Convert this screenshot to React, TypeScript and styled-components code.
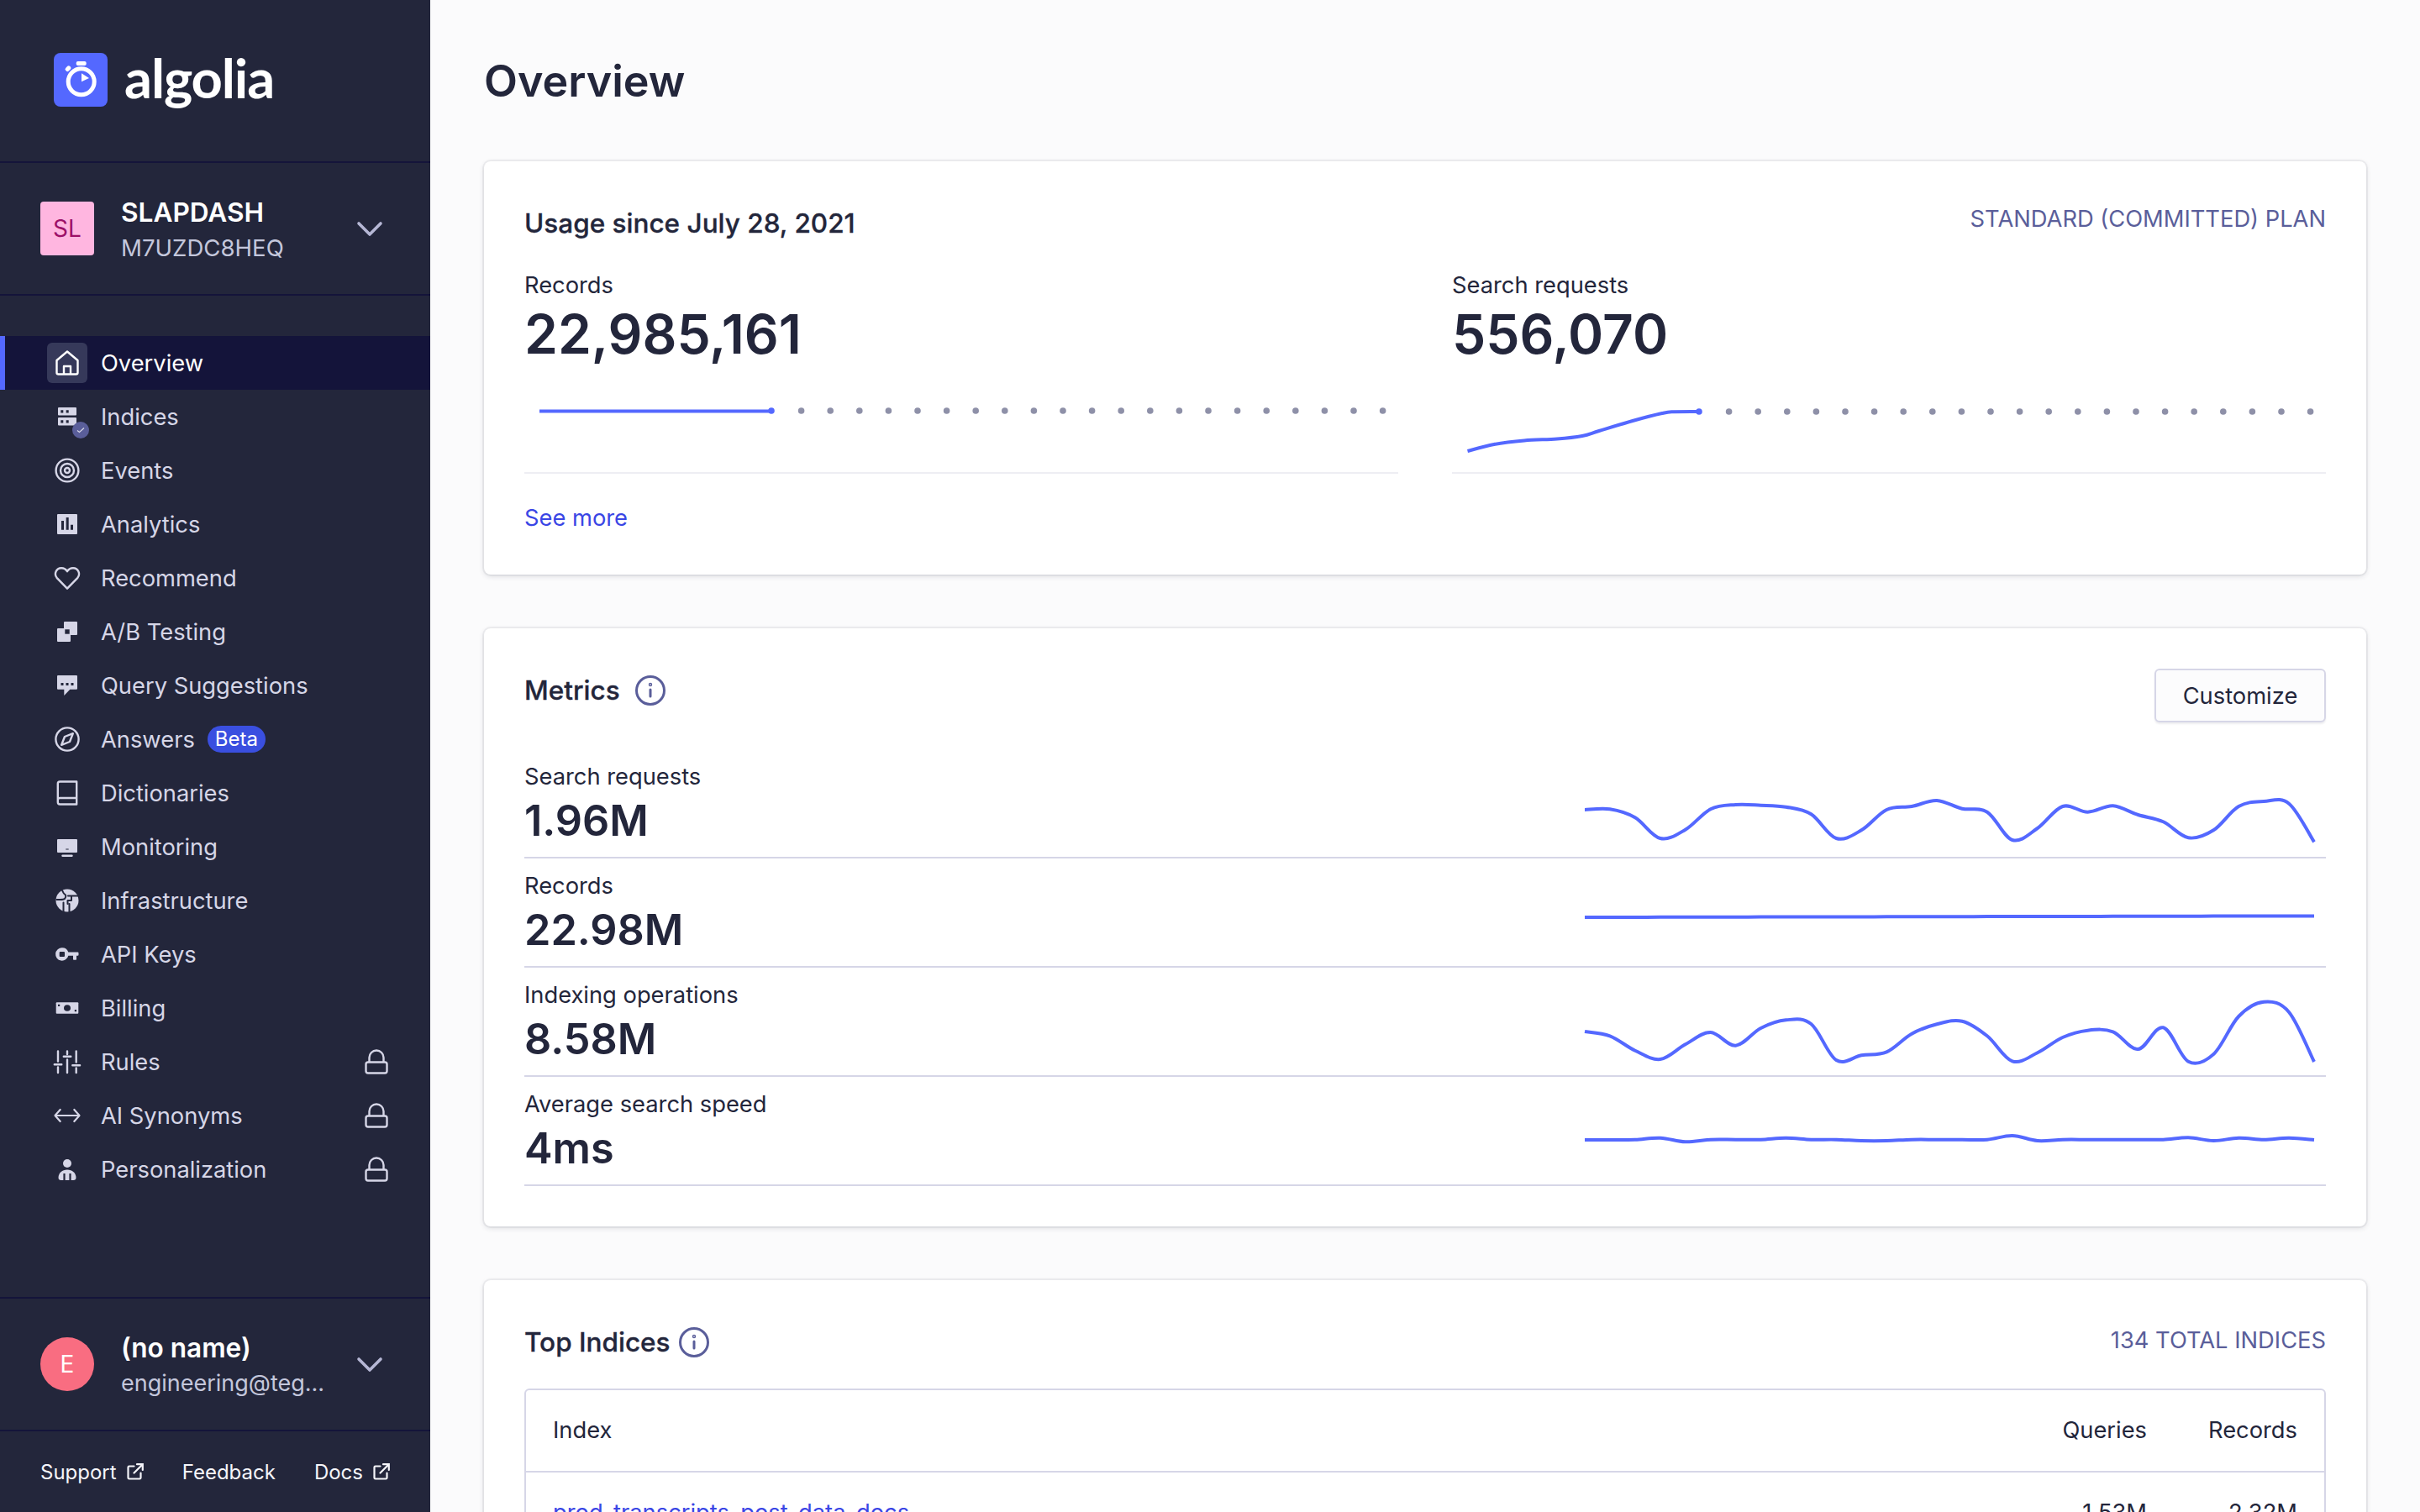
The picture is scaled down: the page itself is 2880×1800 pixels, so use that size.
import React, { FC, ReactNode } from "react";
import styled, { createGlobalStyle } from "styled-components";

const GlobalStyle = createGlobalStyle`
  html, body {
    margin: 0;
    padding: 0;
    height: 1800px;
    overflow: hidden;
    background: #fbfbfc;
    font-family: Inter, "Liberation Sans", sans-serif;
    color: #23263b;
  }
  * {
    box-sizing: border-box;
  }
`;

// Build a smooth line through evenly spaced samples
const smoothPath = (pts: [number, number][]) => {
  let d = `M${pts[0][0]} ${pts[0][1]}`;
  for (let i = 0; i < pts.length - 1; i++) {
    const p0 = pts[i - 1] || pts[i];
    const p1 = pts[i];
    const p2 = pts[i + 1];
    const p3 = pts[i + 2] || p2;
    const k = 0.17;
    d += ` C${(p1[0] + (p2[0] - p0[0]) * k).toFixed(1)} ${(p1[1] + (p2[1] - p0[1]) * k).toFixed(1)} ${(p2[0] - (p3[0] - p1[0]) * k).toFixed(1)} ${(p2[1] - (p3[1] - p1[1]) * k).toFixed(1)} ${p2[0].toFixed(1)} ${p2[1].toFixed(1)}`;
  }
  return d;
};

const sparkPoints = (ys: number[]): [number, number][] =>
  ys.map((y, i) => [2 + (i * 868) / 29, y]);

const searchLine = [612, 610, 640, 714, 683, 610, 594, 596, 602, 628, 714, 685, 612, 600, 579, 608, 620, 720, 678, 600, 620, 598, 630, 655, 712, 685, 600, 582, 590, 727].map(
  v => v / 3 - 132
);
const recordsLine = Array.from({ length: 30 }, (_, i) => 70 - (i * 1.6) / 29);
const indexingLine = [204, 220, 272, 303, 250, 207, 254, 192, 163, 177, 306, 289, 277, 212, 178, 167, 220, 310, 280, 225, 200, 205, 267, 190, 311, 285, 150, 98, 135, 312].map(
  v => v / 3 + 8
);
const speedLine = [591, 591, 590, 584, 598, 590, 590, 590, 584, 590, 590, 594, 594, 590, 590, 590, 590, 576, 594, 590, 590, 590, 590, 590, 583, 594, 584, 590, 584, 591].map(
  v => v / 3 - 122
);

const Page = styled.div`
  display: flex;
  width: 2880px;
  height: 1800px;
  overflow: hidden;
`;

const Sidebar = styled.aside`
  display: flex;
  flex: 0 0 512px;
  flex-direction: column;
  min-width: 0;
  height: 1800px;
  background: #23263b;
  color: #d6d6e7;
`;

const LogoBar = styled.div`
  display: flex;
  align-items: center;
  gap: 20px;
  height: 194px;
  padding: 0 0 2px 64px;
  border-bottom: 2px solid #14143a;
`;

const LogoWord = styled.span`
  margin-top: -6px;
  color: #fff;
  font-family: Lato, sans-serif;
  font-size: 65px;
  font-weight: 700;
  letter-spacing: -1.1px;
  line-height: 64px;
`;

const Switcher = styled.div`
  display: flex;
  align-items: center;
  gap: 32px;
  height: 158px;
  padding: 0 56px 0 48px;
  border-bottom: 2px solid #14143a;
`;

const Avatar = styled.div<{ $round?: boolean }>`
  display: flex;
  flex: 0 0 64px;
  align-items: center;
  justify-content: center;
  height: 64px;
  border-radius: ${p => (p.$round ? "50%" : "4px")};
  background: ${p => (p.$round ? "#f96d81" : "#ffb6e0")};
  color: ${p => (p.$round ? "#fff" : "#9c1068")};
  font-size: 28px;
`;

const SwitcherText = styled.div`
  flex: 1;
  min-width: 0;
  padding-top: 2px;
`;

const SwitcherTitle = styled.div`
  color: #fff;
  font-size: 31.6px;
  font-weight: 600;
  line-height: 44px;
`;

const SwitcherSub = styled.div`
  overflow: hidden;
  color: #c4c7dc;
  font-size: 27.6px;
  line-height: 40px;
  white-space: nowrap;
`;

const EmailSub = styled(SwitcherSub)`
  font-size: 27px;
`;

const Chevron = styled.svg`
  flex: 0 0 32px;
  height: 32px;
  fill: none;
  stroke: #b6b7d5;
  stroke-linecap: round;
  stroke-linejoin: round;
  stroke-width: 3.6;
`;

const Nav = styled.nav`
  display: flex;
  flex: 1;
  flex-direction: column;
  padding-top: 48px;
`;

const NavItem = styled.div<{ $active?: boolean }>`
  display: flex;
  align-items: center;
  gap: 16px;
  height: 64px;
  padding: 0 48px 0 56px;
  background: ${p => (p.$active ? "#14143a" : "transparent")};
  box-shadow: ${p => (p.$active ? "inset 6px 0 0 #5468ff" : "none")};
  color: ${p => (p.$active ? "#fff" : "#d6d6e7")};
  font-size: 27.3px;
  line-height: 40px;
`;

const NavLabel = styled.span`
  padding-top: 2px;
`;

const IconBox = styled.div<{ $active?: boolean }>`
  position: relative;
  flex: 0 0 48px;
  height: 48px;
  border-radius: 6px;
  background: ${p => (p.$active ? "#36395a" : "transparent")};
`;

const Glyph = styled.svg`
  display: block;
  width: 48px;
  height: 48px;
  color: inherit;
  fill: none;
  stroke: currentColor;
  stroke-linecap: round;
  stroke-linejoin: round;
  stroke-width: 2.4;
`;

const StatusDot = styled.span`
  position: absolute;
  top: 30px;
  left: 30px;
  display: flex;
  align-items: center;
  justify-content: center;
  width: 20px;
  height: 20px;
  border-radius: 50%;
  background: #5a5e9a;
`;

const BetaTag = styled.span`
  margin-left: -1px;
  padding: 0 9px;
  border-radius: 16px;
  background: #3a4fe0;
  color: #fff;
  font-size: 24px;
  line-height: 32px;
`;

const LockIcon = styled.svg`
  flex: 0 0 32px;
  height: 32px;
  margin-left: auto;
  fill: none;
  stroke: #d6d6e7;
  stroke-linejoin: round;
  stroke-width: 2.4;
`;

const UserSwitcher = styled(Switcher)`
  height: 160px;
  border-top: 2px solid #14143a;
`;

const SideFooter = styled.div`
  display: flex;
  flex: 0 0 96px;
  align-items: center;
  justify-content: space-between;
  padding: 0 48px;
  color: #f5f5fa;
  font-size: 24px;
`;

const FooterLink = styled.span`
  display: flex;
  align-items: center;
  gap: 12px;
`;

const ExternalIcon = styled.svg`
  width: 20px;
  height: 20px;
  fill: none;
  stroke: currentColor;
  stroke-linecap: round;
  stroke-width: 2.2;
`;

const Main = styled.main`
  display: flex;
  flex: 1;
  flex-direction: column;
  gap: 64px;
  min-width: 0;
  padding: 0 64px;
`;

const PageTitle = styled.h1`
  flex: none;
  height: 128px;
  margin: 0;
  padding-top: 65px;
  color: #23263b;
  font-size: 52px;
  font-weight: 600;
  line-height: 64px;
`;

const Card = styled.section`
  flex: none;
  padding: 48px;
  border-radius: 8px;
  background: #fff;
  box-shadow: 0 0 0 2px rgba(35, 38, 59, 0.05), 0 2px 6px rgba(35, 38, 59, 0.15);
`;

const CardHead = styled.div<{ $height: number }>`
  display: flex;
  align-items: flex-start;
  justify-content: space-between;
  height: ${p => p.$height}px;
`;

const CardTitle = styled.h2`
  display: flex;
  align-items: center;
  gap: 18px;
  margin: 0;
  font-size: 31.5px;
  font-weight: 500;
  -webkit-text-stroke: 0.3px #23263b;
  line-height: 52px;
`;

const TopTitle = styled(CardTitle)`
  gap: 10px;
`;

const PlanLabel = styled.span<{ $top?: number }>`
  margin-top: ${p => p.$top || 1}px;
  color: #5a5e9a;
  font-size: 27.3px;
  line-height: 40px;
`;

const InfoIcon = styled.svg`
  width: 36px;
  height: 36px;
  fill: none;
  stroke: #5a5e9a;
  stroke-linecap: round;
  stroke-width: 3;
`;

const StatGrid = styled.div`
  display: grid;
  grid-template-columns: 1040px 1040px;
  gap: 64px;
`;

const StatLabel = styled.div`
  font-size: 27.3px;
  line-height: 40px;
`;

const StatValue = styled.div`
  font-size: 64px;
  font-weight: 600;
  line-height: 76px;
`;

const UsageChart = styled.svg`
  display: block;
  width: 1040px;
  height: 128px;
  border-bottom: 2px solid #eeeef3;
  fill: none;
`;

const SeeMore = styled.div`
  margin: 33px 0 -1px;
  color: #3a46e5;
  font-size: 27.3px;
  line-height: 40px;
`;

const CustomizeButton = styled.button`
  width: 204px;
  height: 64px;
  border: 2px solid #d6d6e7;
  border-radius: 6px;
  background: #fcfcfd;
  box-shadow: 0 2px 2px rgba(35, 38, 59, 0.08);
  color: #23263b;
  font-family: inherit;
  font-size: 27.3px;
`;

const MetricRow = styled.div`
  position: relative;
  display: flex;
  justify-content: space-between;
  height: 130px;
  padding-top: 13px;
  border-bottom: 2px solid #d6d6e7;
`;

const MetricValue = styled.div`
  font-size: 50.4px;
  font-weight: 600;
  line-height: 64px;
`;

const Spark = styled.svg`
  flex: none;
  width: 872px;
  height: 128px;
  margin: -13px 12px 0 0;
  fill: none;
  stroke: #5468ff;
  stroke-linecap: butt;
  stroke-linejoin: round;
  stroke-width: 4;
`;

const IndexTable = styled.div`
  border: 2px solid #d6d6e7;
  border-radius: 6px;
`;

const TableRow = styled.div<{ $head?: boolean }>`
  display: grid;
  grid-template-columns: 1fr 179px 179px;
  padding: 28px 32px;
  border-bottom: ${p => (p.$head ? "2px solid #d6d6e7" : "none")};
  font-size: 27.3px;
  line-height: 40px;
`;

const NumberCell = styled.div`
  text-align: right;
`;

const IndexLink = styled.div`
  color: #3a46e5;
`;

const Dark = "#23263b";

const navItems: { label: string; icon: ReactNode; locked?: boolean; beta?: boolean; status?: boolean }[] = [
  {
    label: "Indices",
    status: true,
    icon: (
      <>
        <path fill="currentColor" stroke="none" d="M14 13h20a1 1 0 0 1 1 1v7.500a1 1 0 0 1-1 1H14a1 1 0 0 1-1-1V14a1 1 0 0 1 1-1zM14 25h20a1 1 0 0 1 1 1v7.500a1 1 0 0 1-1 1H14a1 1 0 0 1-1-1V26a1 1 0 0 1 1-1z" />
        <path fill={Dark} stroke="none" d="M16.300 16.300h3v3.300h-3zM22.700 16.300h3v3.300h-3zM16.300 28.300h3v3.300h-3zM22.700 28.300h3v3.300h-3z" />
      </>
    )
  },
  {
    label: "Events",
    icon: (
      <>
        <circle cx="24" cy="24" r="13.400" />
        <circle cx="24" cy="24" r="8" />
        <circle cx="24" cy="24" r="3" />
      </>
    )
  },
  {
    label: "Analytics",
    icon: (
      <>
        <rect x="12" y="12" width="24" height="24" rx="1" fill="currentColor" stroke="none" />
        <path fill={Dark} stroke="none" d="M17 20h3v10.700h-3zM22.700 16h3v14.700h-3zM28 24.700h3v6h-3z" />
      </>
    )
  },
  {
    label: "Recommend",
    icon: <path d="M24 36.700 11.600 23.800C7.900 19.300 10.900 12.200 17 12.200c3 0 5.500 1.500 7 4 1.500-2.500 4-4 7-4 6.100 0 9.100 7.100 5.400 11.600z" />
  },
  {
    label: "A/B Testing",
    icon: (
      <>
        <rect x="20" y="12" width="16" height="16" rx="1" fill="currentColor" stroke="none" />
        <rect x="12" y="20" width="16" height="16" rx="1" fill="currentColor" stroke="none" />
        <rect x="21.300" y="21.300" width="5.400" height="5.400" fill={Dark} stroke="none" />
      </>
    )
  },
  {
    label: "Query Suggestions",
    icon: (
      <>
        <path fill="currentColor" stroke="none" d="M13 12h22a1 1 0 0 1 1 1v14.700a1 1 0 0 1-1 1h-7.700L20.300 36v-7.300H13a1 1 0 0 1-1-1V13a1 1 0 0 1 1-1z" />
        <path fill={Dark} stroke="none" d="M16.500 21h3v3h-3zM22.500 21h3v3h-3zM28.500 21h3v3h-3z" />
      </>
    )
  },
  {
    label: "Answers",
    beta: true,
    icon: (
      <>
        <circle cx="24" cy="24" r="13.600" />
        <path d="M30.800 17.200 27 27l-9.800 3.800L21 21z" />
      </>
    )
  },
  {
    label: "Dictionaries",
    icon: <path d="M12.800 33.500V13a2.500 2.500 0 0 1 2.500-2.500h19.900v27H15.300a2.500 2.500 0 0 1-2.500-2.500v-2.500a2.500 2.500 0 0 1 2.500-2.500h19.900" />
  },
  {
    label: "Monitoring",
    icon: (
      <>
        <rect x="12" y="15" width="24" height="16" rx="1" fill="currentColor" stroke="none" />
        <path d="M18.500 34.700h11" />
        <path stroke={Dark} strokeWidth="1" d="M22.700 27h2.600" />
      </>
    )
  },
  {
    label: "Infrastructure",
    icon: (
      <>
        <circle cx="24" cy="24" r="13.500" fill="currentColor" stroke="none" />
        <path stroke={Dark} strokeWidth="2" d="M18 12c1 2.500 2 4 3.500 5 1.200 1 .500 3.500-.500 5-1.500 1.500-5 1-9.500 1M25 18.500h12M29 18.500V24h-4.500v4M19.500 26.500v11.500M26.500 28v10" />
      </>
    )
  },
  {
    label: "API Keys",
    icon: (
      <path
        fill="currentColor"
        stroke="none"
        fillRule="evenodd"
        d="M18 16.300a7.700 7.700 0 0 1 7.300 5.200h11.200a1 1 0 0 1 1 1v2.200a1 1 0 0 1-1 1H35v4.300a.8.800 0 0 1-.8.800h-2.400a.8.800 0 0 1-.8-.8v-4.300h-5.700A7.700 7.700 0 1 1 18 16.300zm-2.300 4.700a1 1 0 0 0-1 1v4a1 1 0 0 0 1 1H20a1 1 0 0 0 1-1v-4a1 1 0 0 0-1-1z"
      />
    )
  },
  {
    label: "Billing",
    icon: (
      <>
        <rect x="10.700" y="17.300" width="26.600" height="13.400" rx="1" fill="currentColor" stroke="none" />
        <ellipse cx="24" cy="24" rx="4" ry="3.800" fill={Dark} stroke="none" />
        <path fill={Dark} stroke="none" d="M13 19.700h2.200v2.200H13zM32.800 26.100H35v2.200h-2.200z" />
      </>
    )
  },
  {
    label: "Rules",
    locked: true,
    icon: <path d="M13 11.500v12M13 30.500v6.500M24 11.500v3.500M24 21.500V37M34.700 11.500v13M34.700 31.500V37M8.800 27.300h8.500M19.800 17.700h8.500M30.300 28.300h8.800" />
  },
  {
    label: "AI Synonyms",
    locked: true,
    icon: <path strokeWidth="2.200" d="M9.500 24h29M15.700 17 9.500 24l6.200 7M32.300 17l6.200 7-6.200 7" />
  },
  {
    label: "Personalization",
    locked: true,
    icon: (
      <>
        <circle cx="24" cy="17" r="5" fill="currentColor" stroke="none" />
        <path fill="currentColor" stroke="none" d="M24 24.500c6 0 10.500 4 10.500 9.500 0 1.800-1.200 3-3 3h-15c-1.800 0-3-1.200-3-3 0-5.500 4.500-9.500 10.500-9.500z" />
        <path stroke={Dark} strokeWidth="2.200" strokeLinecap="butt" d="M20.500 29v8M27.500 29v8" />
      </>
    )
  }
];

const Lock = () => (
  <LockIcon viewBox="0 0 32 32">
    <rect x="3.500" y="16.500" width="25" height="13" rx="2.500" />
    <path d="M7.500 16.500V11a8.500 8.500 0 0 1 17 0v5.500" />
  </LockIcon>
);

const ChevronDown = () => (
  <Chevron viewBox="0 0 32 32">
    <path d="M3 10l13 13 13-13" />
  </Chevron>
);

const External = () => (
  <ExternalIcon viewBox="0 0 20 20">
    <path d="M8.500 3.500H2.800a1.300 1.300 0 0 0-1.300 1.300v12.400a1.300 1.300 0 0 0 1.300 1.300h12.400a1.300 1.300 0 0 0 1.300-1.300v-5.700M8.500 11.500 18.500 1.500M12 1.200h6.800V8" />
  </ExternalIcon>
);

const Info = () => (
  <InfoIcon viewBox="0 0 36 36">
    <circle cx="18" cy="18" r="16.500" />
    <path d="M18 17v8" />
    <circle cx="18" cy="11" r="0.700" />
  </InfoIcon>
);

// Dotted remainder of the billing period, after the line stops
const Dots: FC<{ cy: number }> = ({ cy }) => (
  <>
    <circle cx={294} cy={cy} r="3.800" fill="#5468ff" />
    {Array.from({ length: 21 }, (_, i) => (
      <circle key={i} cx={329.6 + i * 34.6} cy={cy} r="3.800" fill="#8e90a8" />
    ))}
  </>
);

const Metric: FC<{ label: string; value: string; line: number[] }> = ({ label, value, line }) => (
  <MetricRow>
    <div>
      <StatLabel>{label}</StatLabel>
      <MetricValue>{value}</MetricValue>
    </div>
    <Spark viewBox="0 0 872 128">
      <path d={smoothPath(sparkPoints(line))} />
    </Spark>
  </MetricRow>
);

const App = () => (
  <Page>
    <GlobalStyle />
    <Sidebar>
      <LogoBar>
        <svg width="64" height="64" viewBox="0 0 64 64">
          <rect width="64" height="64" rx="8" fill="#5468ff" />
          <circle cx="32.700" cy="34.300" r="15.500" fill="none" stroke="#fff" strokeWidth="5" />
          <path fill="#fff" d="M33 24.300l9 5.700-9 4.300z" />
          <rect x="26.700" y="10" width="12" height="5" rx="2" fill="#fff" />
          <rect x="13.500" y="16.200" width="7" height="5" rx="2" fill="#fff" transform="rotate(-45 17 18.700)" />
        </svg>
        <LogoWord>algolia</LogoWord>
      </LogoBar>
      <Switcher>
        <Avatar>SL</Avatar>
        <SwitcherText>
          <SwitcherTitle>SLAPDASH</SwitcherTitle>
          <SwitcherSub>M7UZDC8HEQ</SwitcherSub>
        </SwitcherText>
        <ChevronDown />
      </Switcher>
      <Nav>
        <NavItem $active>
          <IconBox $active>
            <Glyph viewBox="0 0 48 48">
              <path d="M11.500 21 24 10.500 36.500 21v14.500a2 2 0 0 1-2 2h-21a2 2 0 0 1-2-2zM20 37.500V28h8v9.500" />
            </Glyph>
          </IconBox>
          <NavLabel>Overview</NavLabel>
        </NavItem>
        {navItems.map(item => (
          <NavItem key={item.label}>
            <IconBox>
              <Glyph viewBox="0 0 48 48">{item.icon}</Glyph>
              {item.status && (
                <StatusDot>
                  <svg width="12" height="12" viewBox="0 0 12 12" fill="none" stroke="#d6d6e7" strokeWidth="1.200">
                    <path d="M2 6.500l2.500 2L10 3.500" />
                  </svg>
                </StatusDot>
              )}
            </IconBox>
            <NavLabel>{item.label}</NavLabel>
            {item.beta && <BetaTag>Beta</BetaTag>}
            {item.locked && <Lock />}
          </NavItem>
        ))}
      </Nav>
      <UserSwitcher>
        <Avatar $round>E</Avatar>
        <SwitcherText>
          <SwitcherTitle>(no name)</SwitcherTitle>
          <EmailSub>engineering@teg...</EmailSub>
        </SwitcherText>
        <ChevronDown />
      </UserSwitcher>
      <SideFooter>
        <FooterLink>
          Support <External />
        </FooterLink>
        <FooterLink>Feedback</FooterLink>
        <FooterLink>
          Docs <External />
        </FooterLink>
      </SideFooter>
    </Sidebar>
    <Main>
      <PageTitle>Overview</PageTitle>
      <Card>
        <CardHead $height={80}>
          <CardTitle>Usage since July 28, 2021</CardTitle>
          <PlanLabel>STANDARD (COMMITTED) PLAN</PlanLabel>
        </CardHead>
        <StatGrid>
          <div>
            <StatLabel>Records</StatLabel>
            <StatValue>22,985,161</StatValue>
            <UsageChart viewBox="0 0 1040 126">
              <path d="M18 53.500H294" stroke="#5468ff" strokeWidth="4" />
              <Dots cy={53} />
            </UsageChart>
          </div>
          <div>
            <StatLabel>Search requests</StatLabel>
            <StatValue>556,070</StatValue>
            <UsageChart viewBox="0 0 1040 126">
              <path
                d={smoothPath([[18.500, 101], [50, 93], [86, 88.500], [125, 86.500], [155, 83], [175, 77], [215, 65], [250, 56], [264, 54.200], [294, 54]])}
                stroke="#5468ff"
                strokeWidth="4"
              />
              <Dots cy={54} />
            </UsageChart>
          </div>
        </StatGrid>
        <SeeMore>See more</SeeMore>
      </Card>
      <Card>
        <CardHead $height={96}>
          <CardTitle>
            Metrics <Info />
          </CardTitle>
          <CustomizeButton>Customize</CustomizeButton>
        </CardHead>
        <Metric label="Search requests" value="1.96M" line={searchLine} />
        <Metric label="Records" value="22.98M" line={recordsLine} />
        <Metric label="Indexing operations" value="8.58M" line={indexingLine} />
        <Metric label="Average search speed" value="4ms" line={speedLine} />
      </Card>
      <Card>
        <CardHead $height={81}>
          <TopTitle>
            Top Indices <Info />
          </TopTitle>
          <PlanLabel $top={4}>134 TOTAL INDICES</PlanLabel>
        </CardHead>
        <IndexTable>
          <TableRow $head>
            <div>Index</div>
            <NumberCell>Queries</NumberCell>
            <NumberCell>Records</NumberCell>
          </TableRow>
          <TableRow>
            <IndexLink>prod_transcripts_post_data_docs</IndexLink>
            <NumberCell>1.53M</NumberCell>
            <NumberCell>2.32M</NumberCell>
          </TableRow>
        </IndexTable>
      </Card>
    </Main>
  </Page>
);

export default App;
